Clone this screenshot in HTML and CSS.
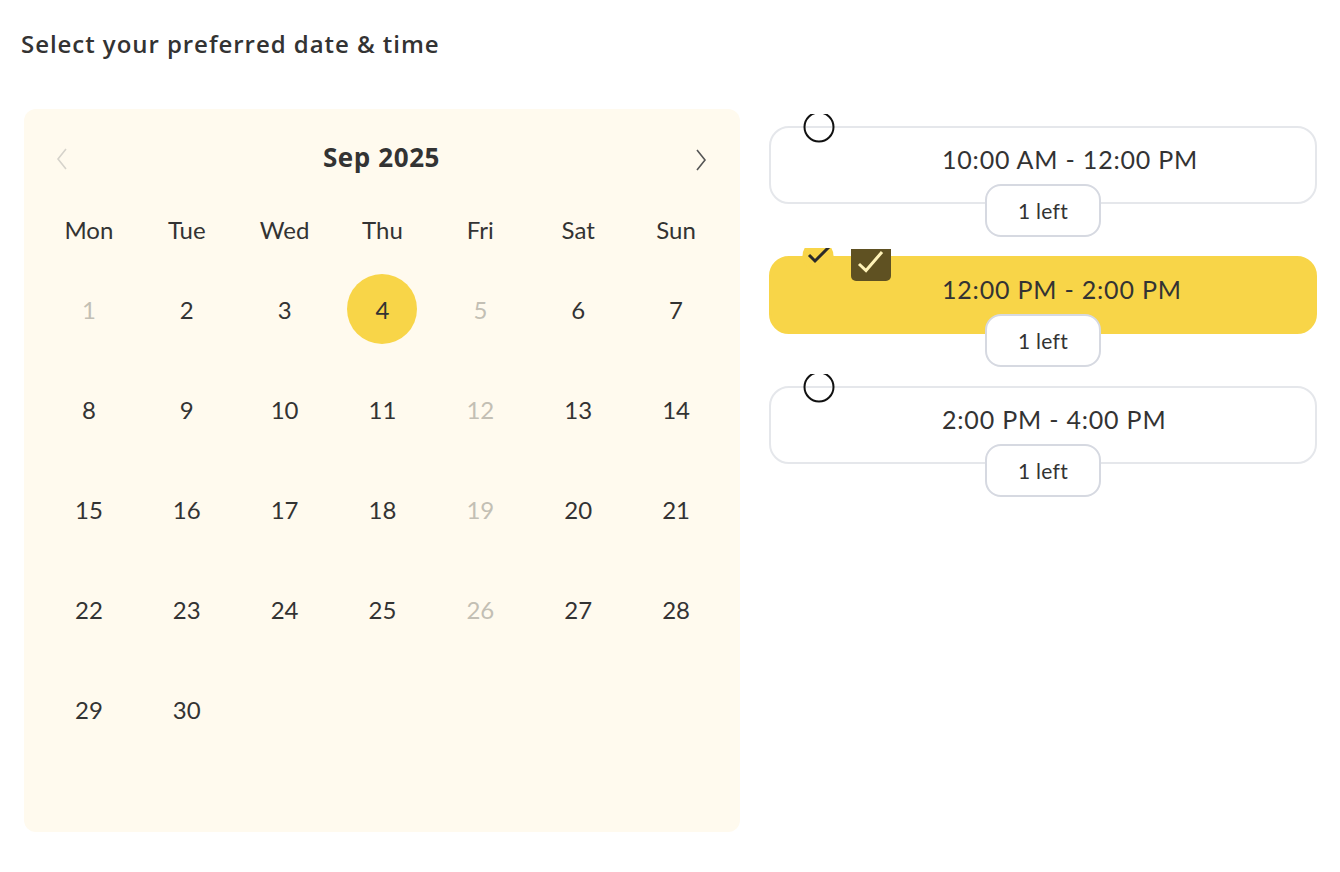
FILE: index.html
```html
<!DOCTYPE html>
<html lang="en">
<head>
<meta charset="utf-8">
<title>Select date &amp; time</title>
<link rel="stylesheet" href="styles.css">
</head>
<body>
<main class="page">
  <h1 class="title">Select your preferred date &amp; time</h1>
  <div class="content">
    <section class="calendar">
      <div class="cal-head">
        <button class="nav prev" aria-label="Previous month">
          <svg width="12" height="22" viewBox="0 0 12 22"><path d="M10 1 L2 11 L10 21" fill="none" stroke="#d6d3cb" stroke-width="1.6"/></svg>
        </button>
        <div class="month">Sep 2025</div>
        <button class="nav next" aria-label="Next month">
          <svg width="12" height="22" viewBox="0 0 12 22"><path d="M2 1 L10 11 L2 21" fill="none" stroke="#555" stroke-width="1.6"/></svg>
        </button>
      </div>
      <div class="weekdays">
        <span>Mon</span><span>Tue</span><span>Wed</span><span>Thu</span><span>Fri</span><span>Sat</span><span>Sun</span>
      </div>
      <div class="days">
        <span class="day off">1</span><span class="day">2</span><span class="day">3</span><span class="day sel"><b>4</b></span><span class="day off">5</span><span class="day">6</span><span class="day">7</span>
        <span class="day">8</span><span class="day">9</span><span class="day">10</span><span class="day">11</span><span class="day off">12</span><span class="day">13</span><span class="day">14</span>
        <span class="day">15</span><span class="day">16</span><span class="day">17</span><span class="day">18</span><span class="day off">19</span><span class="day">20</span><span class="day">21</span>
        <span class="day">22</span><span class="day">23</span><span class="day">24</span><span class="day">25</span><span class="day off">26</span><span class="day">27</span><span class="day">28</span>
        <span class="day">29</span><span class="day">30</span>
      </div>
    </section>

    <section class="slots">
      <div class="slot">
        <svg class="radio" width="32" height="32" viewBox="0 0 32 32"><circle cx="16" cy="16" r="14.5" fill="none" stroke="#111" stroke-width="2"/></svg>
        <div class="slot-time">10:00 AM - 12:00 PM</div>
        <div class="left">1 left</div>
      </div>
      <div class="slot active">
        <svg class="radio-on" width="32" height="32" viewBox="0 0 32 32"><circle cx="16" cy="16" r="15.5" fill="#f8d548"/><path d="M7 15 L13 21 L27 7" fill="none" stroke="#2a2a2a" stroke-width="3"/></svg>
        <span class="check-box"><svg width="40" height="32" viewBox="0 0 40 32"><path d="M8 15 L15 21.5 L31 3" fill="none" stroke="#fff3b8" stroke-width="3"/></svg></span>
        <div class="slot-time">12:00 PM - 2:00 PM</div>
        <div class="left">1 left</div>
      </div>
      <div class="slot">
        <svg class="radio" width="32" height="32" viewBox="0 0 32 32"><circle cx="16" cy="16" r="14.5" fill="none" stroke="#111" stroke-width="2"/></svg>
        <div class="slot-time">2:00 PM - 4:00 PM</div>
        <div class="left">1 left</div>
      </div>
    </section>
  </div>
</main>
</body>
</html>
```

FILE: styles.css
```css
* { box-sizing: border-box; }
html, body { margin: 0; background: #fff; }
body {
  font-family: "Lato", "Noto Sans", sans-serif;
  color: #333;
}
.page {
  padding: 27px 23px 0 24px;
}
.title {
  margin: 0 0 0 -3px;
  font-family: "Open Sans", "Lato", sans-serif;
  font-size: 24px;
  line-height: 34px;
  font-weight: 600;
  letter-spacing: 0.95px;
  color: #333;
}
.content {
  display: flex;
  gap: 29px;
  margin-top: 48px;
  align-items: flex-start;
}
.calendar {
  width: 716px;
  height: 723px;
  background: #fffaee;
  border-radius: 12px;
  padding: 28px 15px 0 16px;
}
.cal-head {
  display: flex;
  align-items: center;
  justify-content: space-between;
  height: 40px;
}
.nav {
  border: 0;
  background: none;
  padding: 0;
  width: 40px;
  height: 40px;
  display: flex;
  align-items: center;
  justify-content: center;
}
.nav.prev { margin-left: 2px; margin-top: 4px; }
.nav.next { margin-right: 4px; margin-top: 6px; }
.month {
  font-family: "Open Sans", "Lato", sans-serif;
  font-size: 26px;
  font-weight: 700;
  letter-spacing: 0.6px;
  color: #333;
}
.weekdays, .days {
  display: grid;
  grid-template-columns: repeat(7, 1fr);
}
.weekdays {
  margin-top: 30px;
  height: 44px;
  align-items: center;
  text-align: center;
  font-size: 24px;
  color: #333;
}
.days {
  margin-top: 8px;
  grid-auto-rows: 100px;
}
.day {
  display: flex;
  align-items: center;
  justify-content: center;
  font-size: 24px;
  color: #333;
}
.day.off { color: #c3bfb4; }
.day.sel b {
  font-weight: 400;
  width: 70px;
  height: 70px;
  border-radius: 50%;
  background: #f8d548;
  display: flex;
  align-items: center;
  justify-content: center;
}
.slots {
  width: 548px;
  padding-top: 17px;
  display: flex;
  flex-direction: column;
  gap: 52px;
}
.slot {
  position: relative;
  height: 78px;
  border: 2px solid #e5e7eb;
  border-radius: 20px;
  background: #fff;
}
.slot.active {
  background: #f8d548;
  border-color: #f8d548;
}
.slot-time {
  text-align: left;
  font-size: 25px;
  letter-spacing: 0.8px;
  line-height: 30px;
  padding: 16px 0 0 171px;
  color: #333;
}
.left {
  position: absolute;
  left: 50%;
  bottom: -35px;
  transform: translateX(-50%);
  width: 116px;
  height: 53px;
  background: #fff;
  border: 2px solid #d6d9e1;
  border-radius: 16px;
  display: flex;
  align-items: center;
  justify-content: center;
  font-size: 21px;
  letter-spacing: 0.3px;
  color: #333;
}
.radio {
  position: absolute;
  left: 32px;
  top: -17px;
  clip-path: inset(3px 0 0 0);
}
.radio-on {
  position: absolute;
  left: 31px;
  top: -18px;
  clip-path: inset(8px 0 0 0);
}
.check-box {
  position: absolute;
  left: 80px;
  top: -9px;
  width: 40px;
  height: 32px;
  background: #5f5122;
  border-radius: 0 0 5px 5px;
  display: block;
}
.check-box svg { display: block; }
```
